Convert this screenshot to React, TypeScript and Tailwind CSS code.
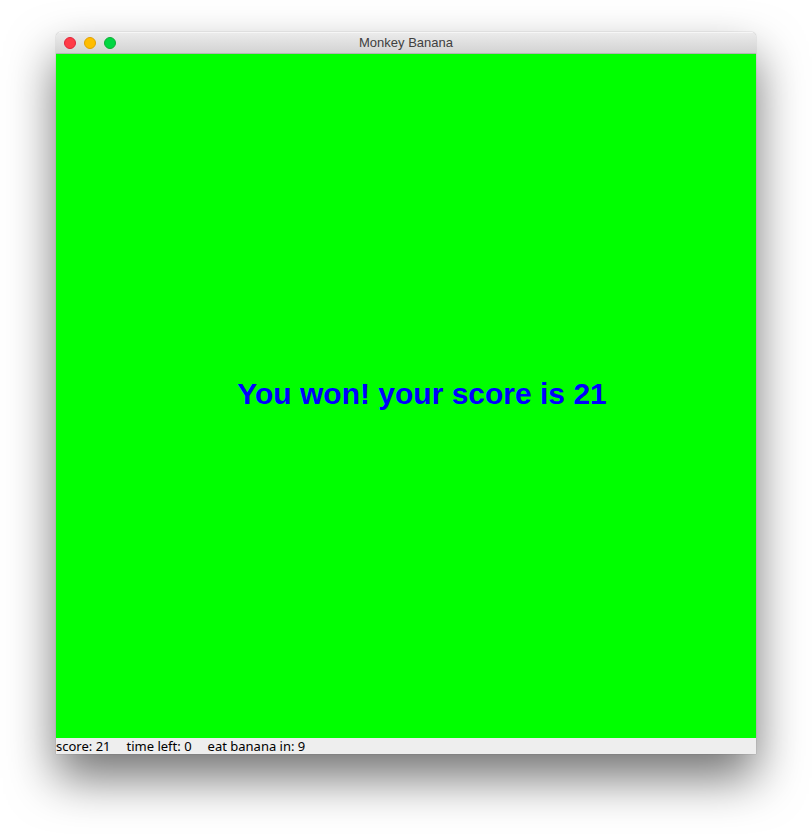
export default function App() {
  return (
    <div className="min-h-screen bg-white px-14 pt-8 pb-20 font-['Liberation_Sans',Arial,sans-serif]">
      <main className="flex flex-col overflow-hidden rounded-t-[5px] shadow-[0_0_1px_rgba(0,0,0,0.5),0_24px_48px_rgba(0,0,0,0.55)]">
        <header className="grid h-[22px] grid-cols-[1fr_auto_1fr] items-center border-t border-b border-t-[#f6f6f6] border-b-[#b4b4b4] bg-linear-to-b from-[#ebebeb] to-[#d3d3d3] px-2">
          <div className="flex gap-2">
            <button type="button" aria-label="Close" className="size-3 rounded-full border border-[#e0243a] bg-[#ff3b47]" />
            <button type="button" aria-label="Minimize" className="size-3 rounded-full border border-[#e0a000] bg-[#ffbd00]" />
            <button type="button" aria-label="Zoom" className="size-3 rounded-full border border-[#0fae35] bg-[#00d742]" />
          </div>
          <h1 className="text-[13px] leading-5 text-[#404040]">Monkey Banana</h1>
        </header>
        <section className="flex min-h-[684px] items-center justify-center bg-[#00ff00] pb-1 pl-8">
          <p className="text-[30px] leading-9 font-bold text-[#0000ff]">You won! your score is 21</p>
        </section>
        <footer className="flex h-4 items-center gap-4 bg-[#eeeeee] font-['Noto_Sans',sans-serif] text-[13px] leading-4 text-black">
          <span>score: 21</span>
          <span>time left: 0</span>
          <span>eat banana in: 9</span>
        </footer>
      </main>
    </div>
  );
}
